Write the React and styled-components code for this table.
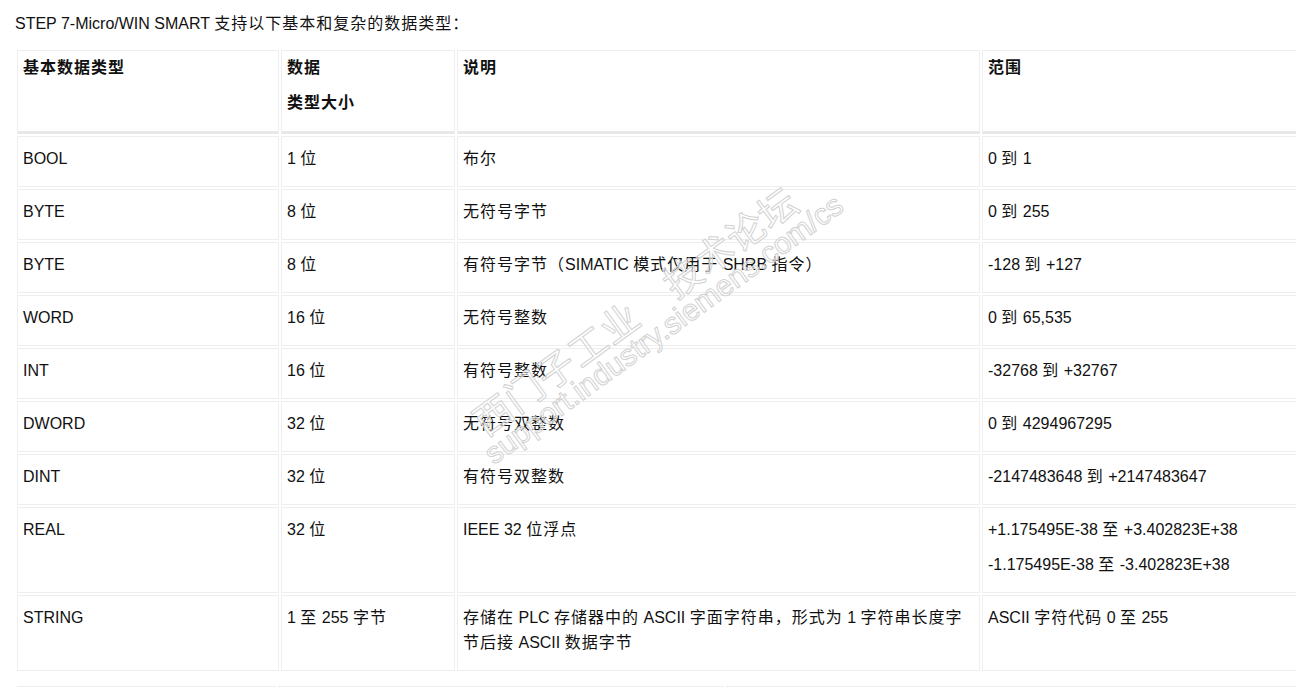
import React from 'react';
import styled, { createGlobalStyle } from 'styled-components';

const GlobalStyle = createGlobalStyle`
  html, body {
    margin: 0;
    padding: 0;
    overflow: hidden;
    background: #fff;
  }
  body {
    font-family: "Liberation Sans", Arial, "Noto Sans CJK SC", sans-serif;
    font-size: 16px;
    color: #111;
  }
`;

const Page = styled.div`
  position: relative;
  padding: 11px 0 0 15px;
  width: 1400px;
`;

const Intro = styled.p`
  margin: 0 0 12px;
  line-height: 25px;
`;

const Table = styled.table`
  border-collapse: separate;
  border-spacing: 2px;
  table-layout: fixed;
  margin: ${props => props.gap || '0'} 0 0 -2px;
  position: relative;
  left: 2px;
`;

const HeadCell = styled.th`
  box-sizing: border-box;
  width: ${props => props.w}px;
  border: 1px solid #eeeeee;
  border-bottom: 3px solid #e8e8e8;
  padding: 4px 5px 6px;
  text-align: left;
  vertical-align: top;
  font-weight: bold;
`;

const Cell = styled.td`
  box-sizing: border-box;
  width: ${props => props.w}px;
  border: 1px solid #eeeeee;
  padding: 9px 5px 5px;
  vertical-align: top;
`;

const Para = styled.p`
  margin: 0 0 10px;
  line-height: 25px;
`;

// CJK glyphs in the page run a little wider than the Latin ones
const Han = styled.span`
  letter-spacing: 1px;
`;

const Watermark = styled.div`
  position: absolute;
  left: 466px;
  top: 410px;
  transform: rotate(-36deg);
  transform-origin: 0 0;
  pointer-events: none;
  color: rgba(255, 255, 255, 0.55);
  -webkit-text-stroke: 1px #d2d2d2;
  white-space: nowrap;
`;

const MarkTitle = styled.div`
  font-family: "Noto Sans CJK SC", sans-serif;
  font-size: 38px;
  line-height: 36px;
  letter-spacing: 1px;
  word-spacing: 30px;
`;

const MarkUrl = styled.div`
  font-family: "Liberation Sans", Arial, sans-serif;
  font-size: 30px;
  line-height: 30px;
  margin-left: -10px;
`;

const hanRun = /([\u3000-\u303f\u4e00-\u9fff\uff00-\uffef]+)/;

const Text = ({ children }) => (
  <>
    {children.split(hanRun).map((part, i) => (
      i % 2 === 1 ? <Han key={i}>{part}</Han> : part
    ))}
  </>
);

const widths = [262, 174, 523, 340];

const headers = [['基本数据类型'], ['数据', '类型大小'], ['说明'], ['范围']];

const rows = [
  ['BOOL', '1 位', '布尔', ['0 到 1']],
  ['BYTE', '8 位', '无符号字节', ['0 到 255']],
  ['BYTE', '8 位', '有符号字节（SIMATIC 模式仅用于 SHRB 指令）', ['-128 到 +127']],
  ['WORD', '16 位', '无符号整数', ['0 到 65,535']],
  ['INT', '16 位', '有符号整数', ['-32768 到 +32767']],
  ['DWORD', '32 位', '无符号双整数', ['0 到 4294967295']],
  ['DINT', '32 位', '有符号双整数', ['-2147483648 到 +2147483647']],
  ['REAL', '32 位', 'IEEE 32 位浮点', ['+1.175495E-38 至 +3.402823E+38', '-1.175495E-38 至 -3.402823E+38']],
  ['STRING', '1 至 255 字节', '存储在 PLC 存储器中的 ASCII 字面字符串，形式为 1 字符串长度字节后接 ASCII 数据字节', ['ASCII 字符代码 0 至 255']],
];

const complexWidths = [259, 446, 600];

const complexRows = [
  ['复杂数据类型', '说明', '范围'],
  ['数组', '相同类型的数据元素组成的集合', '-'],
];

export default function App() {
  return (
    <>
      <GlobalStyle />
      <Page>
        <Intro><Text>STEP 7-Micro/WIN SMART 支持以下基本和复杂的数据类型：</Text></Intro>
        <Table>
          <thead>
            <tr>
              {headers.map((lines, i) => (
                <HeadCell key={lines[0]} w={widths[i]}>
                  {lines.map(line => <Para key={line}><Text>{line}</Text></Para>)}
                </HeadCell>
              ))}
            </tr>
          </thead>
          <tbody>
            {rows.map((row, r) => (
              <tr key={r}>
                <Cell w={widths[0]}><Para>{row[0]}</Para></Cell>
                <Cell w={widths[1]}><Para><Text>{row[1]}</Text></Para></Cell>
                <Cell w={widths[2]}><Para><Text>{row[2]}</Text></Para></Cell>
                <Cell w={widths[3]}>
                  {row[3].map(line => <Para key={line}><Text>{line}</Text></Para>)}
                </Cell>
              </tr>
            ))}
          </tbody>
        </Table>
        <Table gap="11px">
          <tbody>
            {complexRows.map((row, r) => (
              <tr key={r}>
                {row.map((text, i) => (
                  <Cell key={i} w={complexWidths[i]}><Para><Text>{text}</Text></Para></Cell>
                ))}
              </tr>
            ))}
          </tbody>
        </Table>
        <Watermark>
          <MarkTitle>西门子工业 技术论坛</MarkTitle>
          <MarkUrl>support.industry.siemens.com/cs</MarkUrl>
        </Watermark>
      </Page>
    </>
  );
}
